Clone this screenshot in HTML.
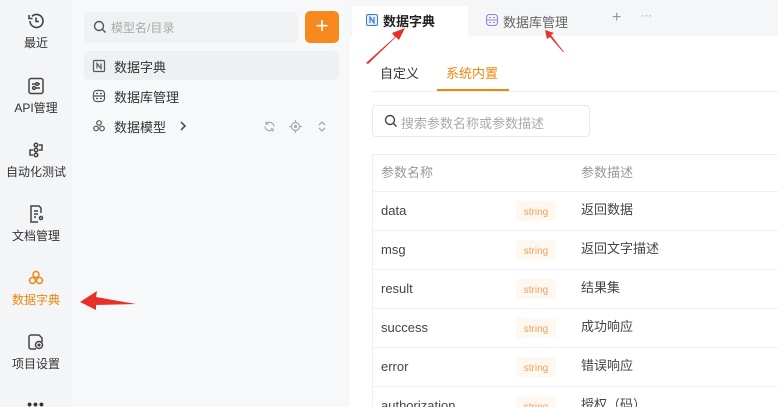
<!DOCTYPE html><html><head><meta charset="utf-8"><style>
*{margin:0;padding:0;box-sizing:border-box}
html,body{width:778px;height:407px;overflow:hidden}
body{font-family:"Liberation Sans","Noto Sans CJK SC",sans-serif;background:#fff;position:relative;font-size:13px;color:#333}
.a{position:absolute}
.rail{left:0;top:0;width:72px;height:407px;background:#f4f5f7}
.ri{position:absolute;left:0;width:72px;text-align:center;font-size:12px;color:#333}
.panel{left:72px;top:0;width:278px;height:407px;background:#f7f8fa}
.tabbar{left:350px;top:0;width:428px;height:36px;background:#f5f6f8}
.row{position:absolute;left:372px;width:406px;height:39px;border-bottom:1px solid #eef0f2}
.row .n{position:absolute;left:9px;top:11px;font-size:13px;line-height:16px;color:#444}
.row .t{position:absolute;left:144px;top:9px;width:40px;height:20px;overflow:hidden;text-align:center;font-size:10px;line-height:24px;color:#f0a060;background:#fff8f0;border-radius:3px}
.row .d{position:absolute;left:209px;top:10px;font-size:13px;line-height:16px;color:#444}
</style></head><body>
<div class="a rail"></div>
<div class="ri" style="top:11px"><svg width="20" height="20" viewBox="0 0 20 20" fill="none" stroke="#444" stroke-width="1.6"><path d="M4 10a6.5 6.5 0 1 0 2-4.7"/><path d="M3 4v3.5h3.5"/><path d="M10 6.5v4h3"/></svg><div>最近</div></div>
<div class="ri" style="top:76px"><svg width="20" height="20" viewBox="0 0 20 20" fill="none" stroke="#444" stroke-width="1.5"><rect x="3" y="2.5" width="14" height="15" rx="2"/><path d="M6 8h8M6 12h8"/><circle cx="11" cy="8" r="1.4" fill="#fff"/><circle cx="8" cy="12" r="1.4" fill="#fff"/></svg><div>API管理</div></div>
<div class="ri" style="top:140px"><svg width="20" height="20" viewBox="0 0 20 20" fill="none" stroke="#444" stroke-width="1.5"><circle cx="10" cy="5" r="1.8"/><circle cx="10" cy="10" r="1.8"/><circle cx="10" cy="15" r="1.8"/><path d="M13 5h3v5h-3M7 10H4v5h3"/></svg><div>自动化测试</div></div>
<div class="ri" style="top:204px"><svg width="20" height="20" viewBox="0 0 20 20" fill="none" stroke="#444" stroke-width="1.5"><path d="M15 9V4l-2-2H5v16h7"/><path d="M8 7h4M8 10h4M8 13h2"/><circle cx="15" cy="14" r="1.5"/></svg><div>文档管理</div></div>
<div class="ri" style="top:268px;color:#f0860f"><svg width="20" height="20" viewBox="0 0 20 20" fill="none" stroke="#f0860f" stroke-width="1.5"><circle cx="10" cy="6.5" r="3"/><circle cx="6.5" cy="12.5" r="3"/><circle cx="13.5" cy="12.5" r="3"/></svg><div>数据字典</div></div>
<div class="ri" style="top:332px"><svg width="20" height="20" viewBox="0 0 20 20" fill="none" stroke="#444" stroke-width="1.5"><path d="M10 17H5a2 2 0 0 1-2-2V5a2 2 0 0 1 2-2h8l3 3v4"/><circle cx="13" cy="13" r="3.5"/><circle cx="13" cy="13" r=".8" fill="#444"/></svg><div>项目设置</div></div>
<div class="ri" style="top:396px;font-size:14px;letter-spacing:1px;font-weight:bold">•••</div>

<div class="a panel"></div>
<div class="a" style="left:84px;top:12px;width:214px;height:31px;background:#f0f1f3;border-radius:6px"></div>
<svg class="a" style="left:93px;top:20px" width="14" height="14" viewBox="0 0 14 14" fill="none" stroke="#555" stroke-width="1.4"><circle cx="6" cy="6" r="4.5"/><path d="M9.5 9.5l3 3"/></svg>
<div class="a" style="left:111px;top:19px;font-size:12px;color:#aaa">模型名/目录</div>
<div class="a" style="left:305px;top:11px;width:34px;height:32px;background:#f7881e;border-radius:5px;color:#fff;text-align:center;line-height:30px;font-size:22px">+</div>
<div class="a" style="left:84px;top:51px;width:255px;height:29px;background:#eef0f2;border-radius:5px"></div>
<svg class="a" style="left:92px;top:59px" width="14" height="14" viewBox="0 0 14 14" fill="none" stroke="#555" stroke-width="1.2"><rect x="1.5" y="1.5" width="11" height="11" rx="1"/><path d="M5 9.5V4.5l4 5V4.5"/></svg>
<div class="a" style="left:114px;top:57px;font-size:13px;color:#333">数据字典</div>
<svg class="a" style="left:92px;top:89px" width="14" height="14" viewBox="0 0 14 14" fill="none" stroke="#555" stroke-width="1.2"><rect x="1.5" y="1.5" width="11" height="11" rx="3"/><path d="M1.5 7h11M4 4.5h2M8 4.5h2M4 9.5h2M8 9.5h2"/></svg>
<div class="a" style="left:114px;top:87px;font-size:13px;color:#333">数据库管理</div>
<svg class="a" style="left:92px;top:119px" width="14" height="14" viewBox="0 0 14 14" fill="none" stroke="#555" stroke-width="1.2"><circle cx="7" cy="4" r="2.3"/><circle cx="4" cy="9.5" r="2.3"/><circle cx="10" cy="9.5" r="2.3"/></svg>
<div class="a" style="left:114px;top:117px;font-size:13px;color:#333">数据模型</div>
<svg class="a" style="left:178px;top:121px" width="10" height="10" viewBox="0 0 10 10" fill="none" stroke="#444" stroke-width="1.5"><path d="M3 1l4 4-4 4"/></svg>
<svg class="a" style="left:263px;top:120px" width="13" height="13" viewBox="0 0 13 13" fill="none" stroke="#aaa" stroke-width="1.2"><path d="M11 6.5A4.5 4.5 0 0 0 3 4M2 6.5A4.5 4.5 0 0 0 10 9"/><path d="M3 1.5V4h2.5M10 11.5V9H7.5"/></svg>
<svg class="a" style="left:289px;top:120px" width="13" height="13" viewBox="0 0 13 13" fill="none" stroke="#aaa" stroke-width="1.2"><circle cx="6.5" cy="6.5" r="4"/><circle cx="6.5" cy="6.5" r="1" fill="#aaa"/><path d="M6.5 0v2.5M6.5 10.5V13M0 6.5h2.5M10.5 6.5H13"/></svg>
<svg class="a" style="left:316px;top:120px" width="12" height="13" viewBox="0 0 12 13" fill="none" stroke="#aaa" stroke-width="1.3"><path d="M3 5l3-3 3 3M3 8l3 3 3-3"/></svg>

<div class="a tabbar"></div>
<div class="a" style="left:352px;top:6px;width:116px;height:30px;background:#fff"></div>
<svg class="a" style="left:366px;top:14px" width="12" height="12" viewBox="0 0 12 12"><rect x=".5" y=".5" width="11" height="11" rx="1.5" fill="#e8f0fb" stroke="#3a7bd5"/><path d="M4 9V3l4 6V3" fill="none" stroke="#3a7bd5" stroke-width="1.2"/></svg>
<div class="a" style="left:383px;top:11px;font-size:13px;font-weight:bold;color:#222">数据字典</div>
<svg class="a" style="left:486px;top:14px" width="12" height="12" viewBox="0 0 12 12" fill="none" stroke="#9b7fe0" stroke-width="1.1"><rect x=".5" y=".5" width="11" height="11" rx="3"/><path d="M.5 6h11M3 3.5h2M7 3.5h2M3 8.5h2M7 8.5h2"/></svg>
<div class="a" style="left:503px;top:12px;font-size:13px;color:#666">数据库管理</div>
<div class="a" style="left:612px;top:9px;font-size:16px;color:#999">+</div>
<div class="a" style="left:641px;top:10px;font-size:11px;color:#999">···</div>

<div class="a" style="left:380px;top:63px;font-size:13px;color:#333">自定义</div>
<div class="a" style="left:446px;top:63px;font-size:13px;color:#f0860f">系统内置</div>
<div class="a" style="left:372px;top:91px;width:406px;height:1px;background:#eceef0"></div>
<div class="a" style="left:437px;top:89px;width:72px;height:2px;background:#f0860f"></div>

<div class="a" style="left:372px;top:105px;width:218px;height:32px;border:1px solid #e6e8eb;border-radius:4px"></div>
<svg class="a" style="left:384px;top:114px" width="14" height="14" viewBox="0 0 14 14" fill="none" stroke="#444" stroke-width="1.4"><circle cx="6" cy="6" r="4.5"/><path d="M9.5 9.5l3 3"/></svg>
<div class="a" style="left:401px;top:113px;font-size:13px;color:#aaa">搜索参数名称或参数描述</div>

<div class="a" style="left:372px;top:154px;width:406px;height:253px;border-left:1px solid #eceef0;border-top:1px solid #eceef0"></div>
<div class="row" style="top:155px;height:37px"><div class="n" style="color:#999;top:10px">参数名称</div><div class="d" style="color:#999;top:10px">参数描述</div></div>
<div class="row" style="top:192px"><div class="n">data</div><div class="t">string</div><div class="d">返回数据</div></div>
<div class="row" style="top:231px"><div class="n">msg</div><div class="t">string</div><div class="d">返回文字描述</div></div>
<div class="row" style="top:270px"><div class="n">result</div><div class="t">string</div><div class="d">结果集</div></div>
<div class="row" style="top:309px"><div class="n">success</div><div class="t">string</div><div class="d">成功响应</div></div>
<div class="row" style="top:348px"><div class="n">error</div><div class="t">string</div><div class="d">错误响应</div></div>
<div class="row" style="top:387px;height:20px;border:none"><div class="n">authorization</div><div class="t">string</div><div class="d">授权（码）</div></div>

<svg class="a" style="left:0;top:0" width="778" height="407" viewBox="0 0 778 407">
<g fill="#e8302a">
<path d="M366 63L395 37l-3-4 13-5-6 12-3-3-28 27z"/>
<path d="M563 52L550 37l-3 2-2-9 9 3-3 2 13 17z"/>
<path d="M136 304L96 297l1-6-17 11 16 8 0-5z"/>
</g></svg>
</body></html>
